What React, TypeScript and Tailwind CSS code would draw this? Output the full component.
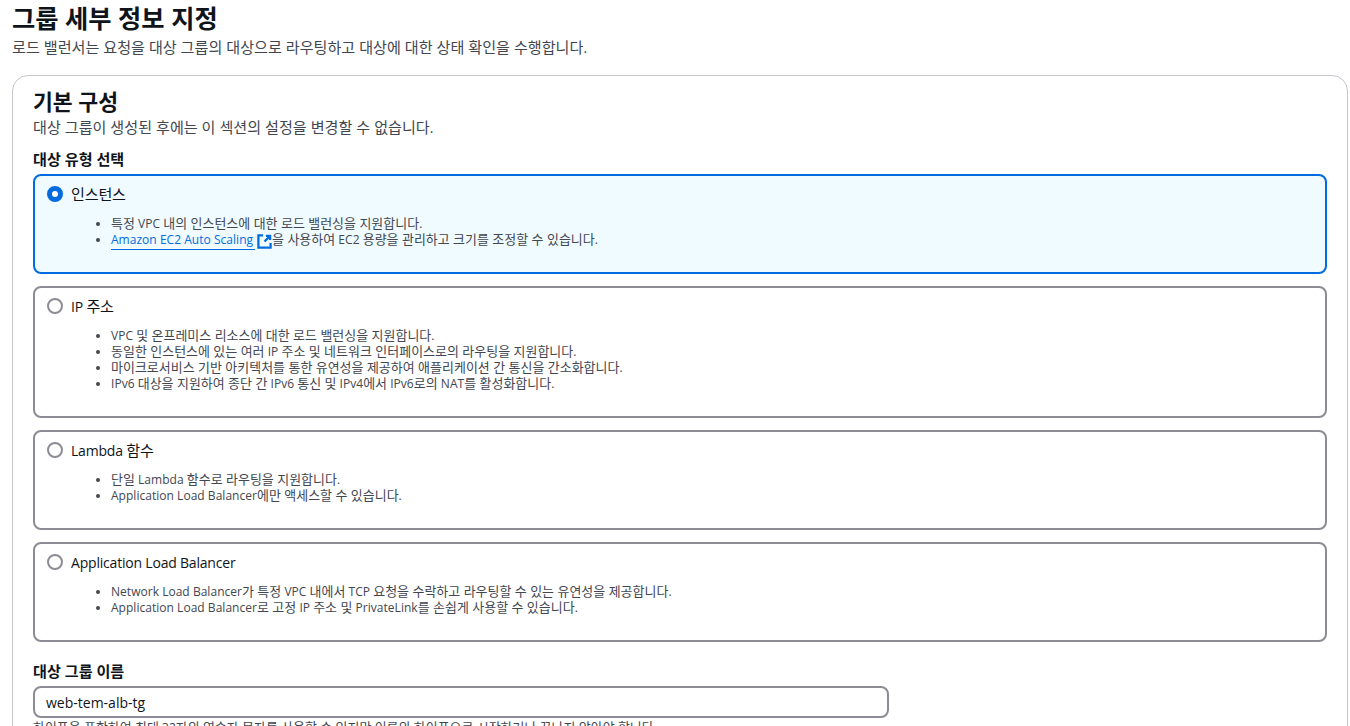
import { ReactNode } from "react";

const font = { fontFamily: '"Open Sans", "Noto Sans CJK KR", sans-serif' };

// Hangul runs come out narrower here than in the screenshot, so bump them a little
function K({ children }: { children: string }) {
  const parts = children.split(/([\uAC00-\uD7A3]+(?: [\uAC00-\uD7A3]+)*)/);
  return (
    <>
      {parts.map((part, i) =>
        i % 2 === 1 ? (
          <span key={i} className="text-[1.08em] leading-none">
            {part}
          </span>
        ) : (
          part
        )
      )}
    </>
  );
}

function ExternalIcon() {
  return (
    <svg viewBox="0 0 16 16" className="inline-block w-[15px] h-[15px] ml-[2px] -my-[3px] align-[-2px] text-[#006ce0]" fill="none" stroke="currentColor" strokeWidth="2.4">
      <path d="M14.5 9.5v5h-13v-13h5" />
      <path d="M9.5 2h4.5v4.5M14 2L8 8" />
    </svg>
  );
}

function Radio({ on }: { on?: boolean }) {
  if (on) {
    return <span className="w-4 h-4 rounded-full border-[5px] border-[#006ce0] bg-white shrink-0" />;
  }
  return <span className="w-4 h-4 rounded-full border-2 border-[#8c8c94] bg-white shrink-0" />;
}

function Option({
  title,
  on,
  height,
  items,
}: {
  title: string;
  on?: boolean;
  height: string;
  items: ReactNode[];
}) {
  return (
    <div
      className={`${height} rounded-lg border-2 pl-[12px] pt-[8px] ${
        on ? "border-[#006ce0] bg-[#f0fbff]" : "border-[#8c8c94] bg-white"
      }`}
    >
      <div className="flex items-center gap-2 h-[20px] text-[14px] tracking-[-0.2px] text-[#0f141a]">
        <Radio on={on} />
        <span>
          <K>{title}</K>
        </span>
      </div>
      <ul className="list-disc pl-[64px] mt-[12px] text-[12px] leading-[16px] tracking-[0.03px] text-[#424650]">
        {items.map((item, i) => (
          <li key={i}>{typeof item === "string" ? <K>{item}</K> : item}</li>
        ))}
      </ul>
    </div>
  );
}

export default function App() {
  return (
    <div className="h-[726px] overflow-hidden bg-white pl-3 pr-[2px] text-[#0f141a]" style={font}>
      <h1 className="pt-[1px] text-[23.4px] leading-[36px] font-bold">
        <K>그룹 세부 정보 지정</K>
      </h1>
      <p className="mt-[1px] text-[14px] leading-[20px] text-[#424650]">
        <K>로드 밸런서는 요청을 대상 그룹의 대상으로 라우팅하고 대상에 대한 상태 확인을 수행합니다.</K>
      </p>

      <div className="mt-[17px] rounded-2xl border border-[#c6c6cd] px-5 pt-[13px] pb-6">
        <h2 className="text-[20px] leading-[28px] font-bold">
          <K>기본 구성</K>
        </h2>
        <p className="mt-[1px] text-[14px] leading-[20px] text-[#424650]">
          <K>대상 그룹이 생성된 후에는 이 섹션의 설정을 변경할 수 없습니다.</K>
        </p>

        <div className="mt-[12px] text-[14px] leading-[20px] font-bold">
          <K>대상 유형 선택</K>
        </div>
        <div className="mt-[4px] flex flex-col gap-[12px]">
          <Option
            on
            title="인스턴스"
            height="h-[100px]"
            items={[
              "특정 VPC 내의 인스턴스에 대한 로드 밸런싱을 지원합니다.",
              <>
                <a className="text-[#006ce0] border-b border-[#006ce0] pb-[1px] pr-[2px]">Amazon EC2 Auto Scaling</a>
                <ExternalIcon />
                <K>을 사용하여 EC2 용량을 관리하고 크기를 조정할 수 있습니다.</K>
              </>,
            ]}
          />
          <Option
            title="IP 주소"
            height="h-[132px]"
            items={[
              "VPC 및 온프레미스 리소스에 대한 로드 밸런싱을 지원합니다.",
              "동일한 인스턴스에 있는 여러 IP 주소 및 네트워크 인터페이스로의 라우팅을 지원합니다.",
              "마이크로서비스 기반 아키텍처를 통한 유연성을 제공하여 애플리케이션 간 통신을 간소화합니다.",
              "IPv6 대상을 지원하여 종단 간 IPv6 통신 및 IPv4에서 IPv6로의 NAT를 활성화합니다.",
            ]}
          />
          <Option
            title="Lambda 함수"
            height="h-[100px]"
            items={[
              "단일 Lambda 함수로 라우팅을 지원합니다.",
              "Application Load Balancer에만 액세스할 수 있습니다.",
            ]}
          />
          <Option
            title="Application Load Balancer"
            height="h-[100px]"
            items={[
              "Network Load Balancer가 특정 VPC 내에서 TCP 요청을 수락하고 라우팅할 수 있는 유연성을 제공합니다.",
              "Application Load Balancer로 고정 IP 주소 및 PrivateLink를 손쉽게 사용할 수 있습니다.",
            ]}
          />
        </div>

        <div className="mt-[20px] text-[14px] leading-[20px] font-bold">
          <K>대상 그룹 이름</K>
        </div>
        <div className="mt-[4px] w-[856px] h-[32px] rounded-lg border-2 border-[#8c8c94] px-[11px] flex items-center text-[14px]">
          web-tem-alb-tg
        </div>
        <p className="mt-[2px] text-[12px] leading-[16px] text-[#424650]">
          <K>하이픈을 포함하여 최대 32자의 영숫자 문자를 사용할 수 있지만 이름의 하이픈으로 시작하거나 끝나지 않아야 합니다.</K>
        </p>
      </div>
    </div>
  );
}
